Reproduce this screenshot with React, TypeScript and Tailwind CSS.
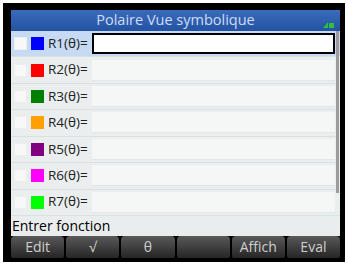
import type React from "react";

interface FuncRow {
  id: string;
  color: string;
}

const rows: FuncRow[] = [
  { id: "R1", color: "bg-[#0000ff]" },
  { id: "R2", color: "bg-[#ff0000]" },
  { id: "R3", color: "bg-[#008000]" },
  { id: "R4", color: "bg-[#ffa000]" },
  { id: "R5", color: "bg-[#800080]" },
  { id: "R6", color: "bg-[#ff00ff]" },
  { id: "R7", color: "bg-[#00ff00]" },
];

const menu = ["Edit", "√", "θ", "", "Affich", "Eval"];

const App: React.FC = () => {
  return (
    <div className="w-[348px] h-[264px] bg-white pt-[3px] pl-[3px]">
      <div
        className="w-[342px] h-[259px] bg-black pt-[7px] pl-[8px]"
        style={{ fontFamily: '"Open Sans", "Noto Sans", sans-serif' }}
      >
        <div className="w-[329px] h-[248px] flex flex-col bg-[#e9eded]">
          {/* title bar */}
          <div className="relative h-[21px] flex items-center justify-center bg-gradient-to-b from-[#3a6cbc] to-[#2452a2] text-[14.5px] text-[#cfdcf5] leading-none">
            Polaire Vue symbolique
            <svg
              className="absolute right-[6px] bottom-[3px]"
              width="11"
              height="6"
              viewBox="0 0 11 6"
            >
              <polygon points="0,6 5,0 5,6" fill="#2fbf3a" />
              <rect x="6" y="1" width="5" height="5" fill="#2fbf3a" />
            </svg>
          </div>

          {/* function rows */}
          <div className="relative h-[185px] flex flex-col">
            {rows.map((r, i) => {
              const active = i === 0;
              return (
                <div
                  key={r.id}
                  className={`flex-1 flex items-center pl-[3px] pr-[5px] border-b border-[#dbe0e0] ${
                    active ? "bg-[#c6dbf3]" : "bg-[#eaeeee]"
                  }`}
                >
                  <div className="w-[13px] h-[13px] bg-[#f8f8f8] border border-[#eeeeee]" />
                  <div className={`ml-[4px] w-[13px] h-[13px] ${r.color}`} />
                  <div className="ml-[4px] w-[44px] text-[13.5px] text-[#222] leading-none">
                    {r.id}(θ)=
                  </div>
                  <div
                    className={`flex-1 h-[21px] ${
                      active
                        ? "bg-white border-2 border-black"
                        : "bg-[#f5f6f6] border-b border-[#e2e6e6]"
                    }`}
                  />
                </div>
              );
            })}
            {/* scrollbar */}
            <div className="absolute right-[1px] top-0 w-[3px] h-[162px] bg-[#9c9c9c]" />
          </div>

          {/* message line */}
          <div className="h-[20px] flex items-center pl-[1px] text-[14px] text-black leading-none">
            Entrer fonction
          </div>

          {/* soft menu */}
          <div className="h-[22px] grid grid-cols-6 gap-[2px] bg-black">
            {menu.map((m, i) => (
              <div
                key={i}
                className="flex items-center justify-center rounded-t-[4px] rounded-b-[2px] bg-gradient-to-b from-[#5a5a5a] to-[#262626] text-[14px] text-[#cfcfcf] leading-none"
              >
                {m}
              </div>
            ))}
          </div>
        </div>
      </div>
    </div>
  );
};

export default App;
